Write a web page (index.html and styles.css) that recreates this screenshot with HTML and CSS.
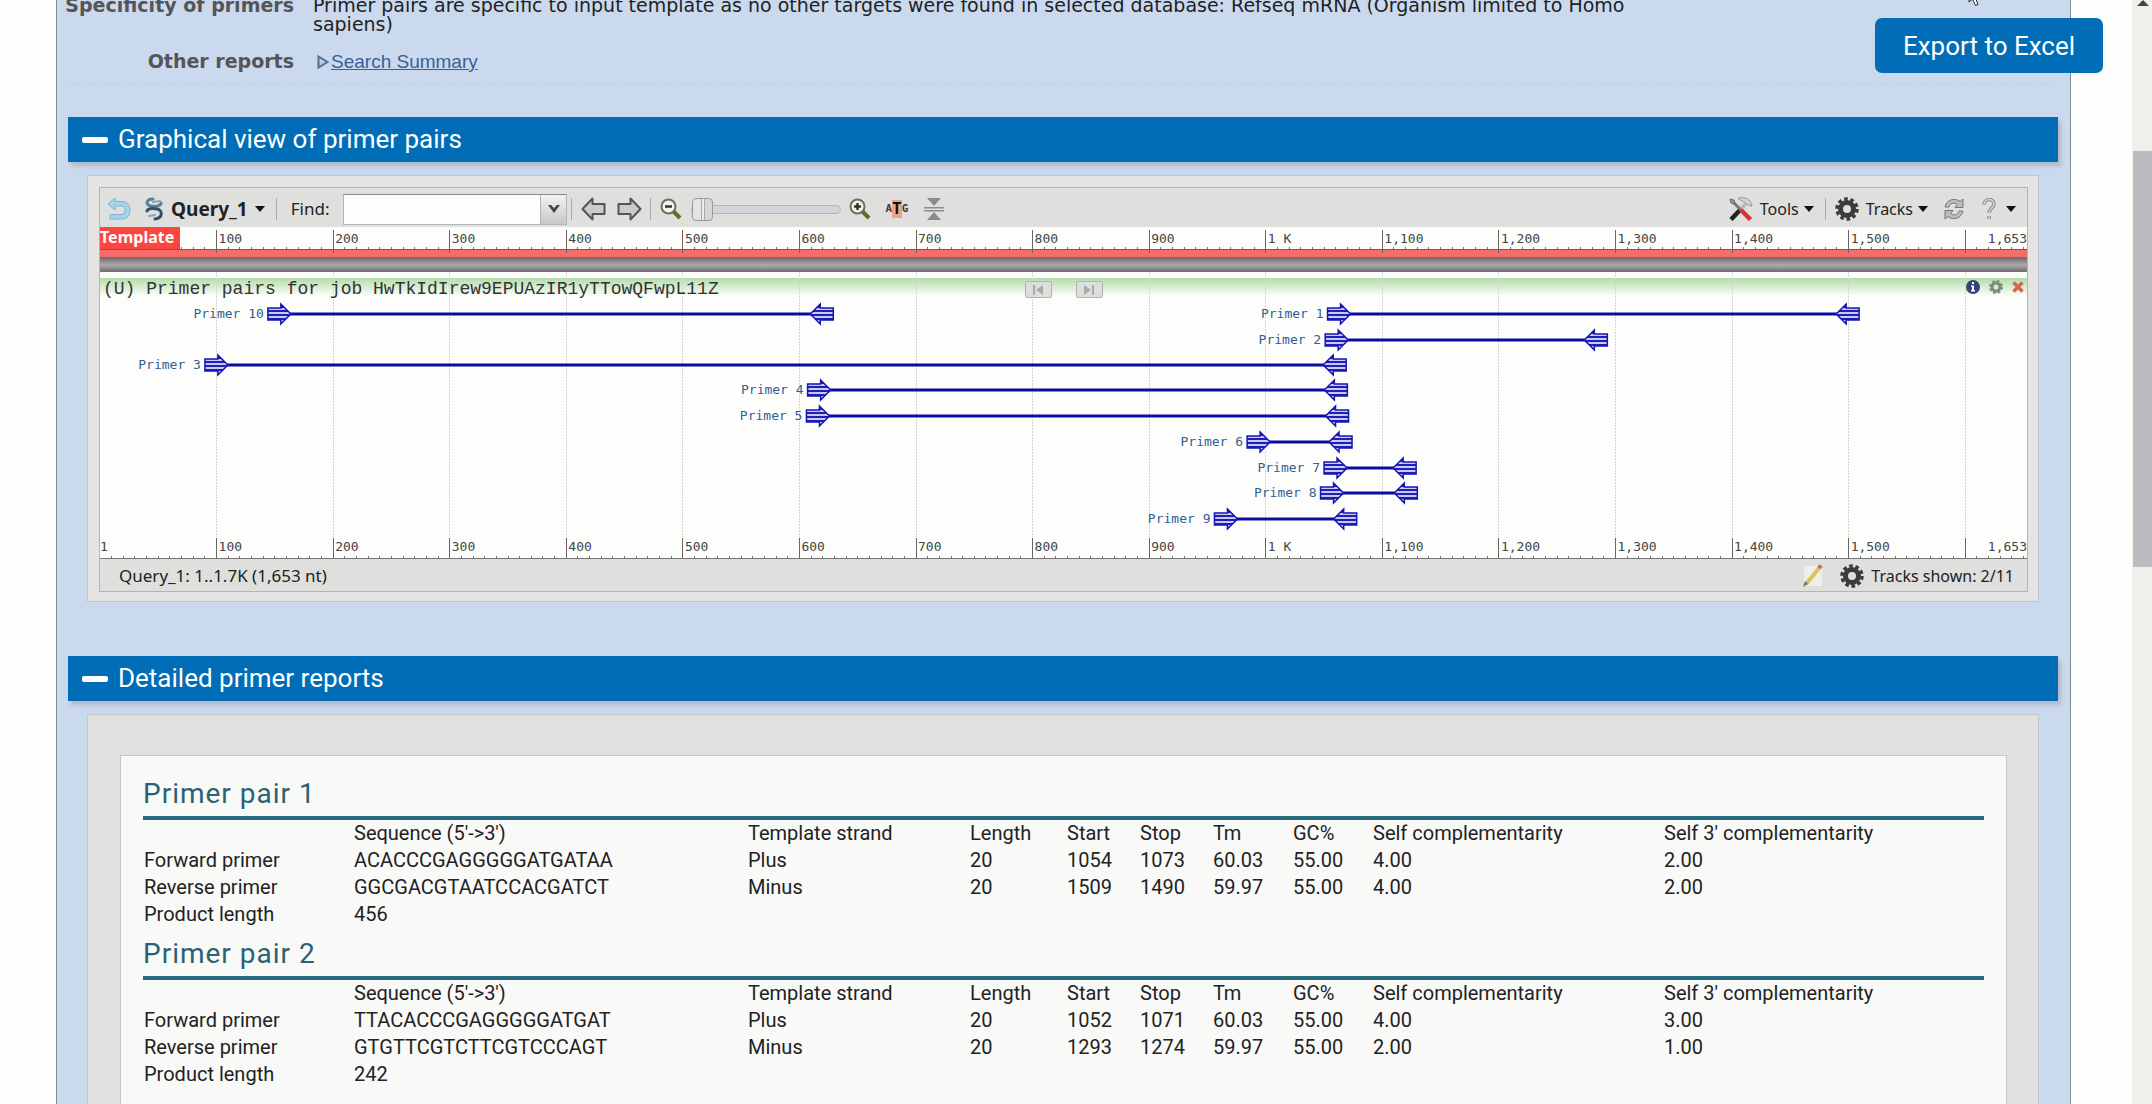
FILE: index.html
```html
<!DOCTYPE html>
<html lang="en">
<head>
<meta charset="utf-8">
<title>Primer-BLAST results</title>
<link rel="stylesheet" href="styles.css">
</head>
<body>
<main class="page">
  <section class="summary">
    <dl class="facts">
      <dt>Specificity of primers</dt>
      <dd>Primer pairs are specific to input template as no other targets were found in selected database: Refseq mRNA (Organism limited to Homo sapiens)</dd>
      <dt>Other reports</dt>
      <dd><svg class="disclosure" viewBox="0 0 12 14" aria-hidden="true"><path d="M1.5 1.5 L10.500 7 L1.500 12.500 Z"/></svg><a href="#search-summary">Search Summary</a></dd>
    </dl>
  </section>

  <h2 class="bar"><button type="button"><span class="minus"></span>Graphical view of primer pairs</button></h2>
  <section class="box graphic">
    <div class="viewer">
      <div class="toolbar">
        <button type="button" class="tool" aria-label="Undo"><svg width="24" height="24" viewBox="0 0 24 24"><path d="M1 7 L8 1 V4.500 H15 C21 4.500 23 9 23 13 C23 19 20 22 15 22 H3 V17.500 H14 C17 17.500 18 15.500 18 13 C18 10 17 9 14 9 H8 V13 Z" fill="#a5d3e8" stroke="#7fb4cf"/></svg></button>
        <button type="button" class="tool query"><svg width="20" height="24" viewBox="0 0 20 24" fill="none" stroke-linecap="round"><path d="M9 2 C2 2 1 8 7 9 C12 10 17 9 17 6" stroke="#5b7f95" stroke-width="3"/><path d="M3 14 C4 11 10 11 13 12 C19 13 19 21 11 22" stroke="#33506a" stroke-width="3"/><path d="M9 5 L16 4 M5 19 L11 18" stroke="#8ba6b6" stroke-width="2"/></svg><b>Query_1</b><i class="caret"></i></button>
        <span class="sep"></span>
        <label class="find" for="find">Find:</label>
        <div class="combo"><input id="find" type="text"><button type="button" aria-label="Show matches"><svg width="14" height="10" viewBox="0 0 14 10"><path d="M1 1 L7 9 L13 1 L10 1 L7 4 L4 1 Z" fill="#444"/></svg></button></div>
        <span class="sep tight"></span>
        <button type="button" class="tool pan" aria-label="Pan left"><svg width="25" height="24" viewBox="0 0 25 24"><path d="M1.500 12 L11.500 1.500 V7 H23.500 V17 H11.500 V22.500 Z" fill="#ccc" stroke="#555" stroke-width="2" stroke-linejoin="round"/></svg></button>
        <button type="button" class="tool pan" aria-label="Pan right"><svg width="25" height="24" viewBox="0 0 25 24"><path d="M23.500 12 L13.500 1.500 V7 H1.500 V17 H13.500 V22.500 Z" fill="#ccc" stroke="#555" stroke-width="2" stroke-linejoin="round"/></svg></button>
        <span class="sep tight"></span>
        <button type="button" class="tool zoom" aria-label="Zoom out"><svg width="22" height="22" viewBox="0 0 22 22"><path d="M13 13 L20 20" stroke="#6d6a20" stroke-width="4"/><circle cx="8.500" cy="8.500" r="7" fill="#f3f3ec" stroke="#6f6f55" stroke-width="2"/><path d="M5 8.500 H12" stroke="#333" stroke-width="2.500"/></svg></button>
        <input class="slider" type="range" min="0" max="100" value="0" aria-label="Zoom level">
        <button type="button" class="tool zoom" aria-label="Zoom in"><svg width="22" height="22" viewBox="0 0 22 22"><path d="M13 13 L20 20" stroke="#6d6a20" stroke-width="4"/><circle cx="8.500" cy="8.500" r="7" fill="#f3f3ec" stroke="#6f6f55" stroke-width="2"/><path d="M5 8.500 H12 M8.500 5 V12" stroke="#333" stroke-width="2.500"/></svg></button>
        <button type="button" class="tool atg" aria-label="Zoom to sequence"><span>A</span><b>T</b><span>G</span></button>
        <button type="button" class="tool" aria-label="Collapse tracks"><svg width="20" height="22" viewBox="0 0 20 22" fill="#8b8b8b"><path d="M3 0 H17 L10 8 Z M3 22 H17 L10 14 Z M0 9 H20 V10.500 H0 Z M0 12 H20 V13.500 H0 Z"/></svg></button>
        <div class="right">
          <button type="button" class="tool menu"><svg width="24" height="24" viewBox="0 0 24 24"><path d="M2 22.500 L11 13" stroke="#222" stroke-width="4.500"/><path d="M11 13 L19 4" stroke="#b9b9b9" stroke-width="3.500"/><path d="M9 1.500 C15 -1 22 2 23 9 L19 8 L15 5 Z" fill="#d4d4d4" stroke="#9a9a9a"/><path d="M3 4 L12 13" stroke="#777" stroke-width="3"/><path d="M1 2 L5 3 L6 7 L2 6 Z" fill="#999" stroke="#666"/><path d="M12 13 L21.500 22.500" stroke="#d5323a" stroke-width="4.500"/></svg>Tools<i class="caret"></i></button>
          <span class="sep"></span>
          <button type="button" class="tool menu"><svg width="24" height="24" viewBox="0 0 24 24" fill="none" stroke="#3c3c3c"><circle cx="12" cy="12" r="10" stroke-width="3.500" stroke-dasharray="3.600 2.683"/><circle cx="12" cy="12" r="6.500" stroke-width="5"/></svg>Tracks<i class="caret"></i></button>
          <button type="button" class="tool refresh" aria-label="Reload"><svg width="22" height="22" viewBox="0 0 22 22" fill="#bdbdbd" stroke="#777"><path d="M2 9 C3 2 12 -1 17 3.500 L20 1 V9.500 H12 L14.500 6.500 C11 4 7 5 6 9 Z"/><path d="M20 13 C19 20 10 23 5 18.500 L2 21 V12.500 H10 L7.500 15.500 C11 18 15 17 16 13 Z"/></svg></button>
          <button type="button" class="tool help" aria-label="Help"><svg width="14" height="22" viewBox="0 0 14 22" fill="none"><path d="M2 7 C2 0 12 0 12 6 C12 10 7 10 7 15 M7 18 V21" stroke="#8a8a8a" stroke-width="3.500"/><path d="M2 7 C2 0 12 0 12 6 C12 10 7 10 7 15 M7 18 V21" stroke="#d6d6d6" stroke-width="1.500"/></svg><i class="caret"></i></button>
        </div>
      </div>
      <div class="plot">
        <svg id="plot" class="canvas" role="img" aria-label="Primer pairs on the template"></svg>
        <div class="nav"><button type="button" aria-label="Previous feature"><svg width="12" height="10" viewBox="0 0 12 10"><path d="M1 0 H3 V10 H1 Z M11 0 V10 L4 5 Z" fill="#aaa"/></svg></button><button type="button" aria-label="Next feature"><svg width="12" height="10" viewBox="0 0 12 10"><path d="M9 0 H11 V10 H9 Z M1 0 V10 L8 5 Z" fill="#aaa"/></svg></button></div>
        <div class="track-tools">
          <button type="button" aria-label="Track information"><svg width="14" height="14" viewBox="0 0 14 14"><circle cx="7" cy="7" r="7" fill="#33447c"/><path d="M6 2 H8 V4 H6 Z M5 5.500 H8 V10 H9 V11.500 H5 V10 H6 V7 H5 Z" fill="#fff"/></svg></button>
          <button type="button" aria-label="Track settings"><svg width="14" height="14" viewBox="0 0 14 14" fill="none" stroke="#7c8c7c"><circle cx="7" cy="7" r="6" stroke-width="2" stroke-dasharray="2.700 2.010"/><circle cx="7" cy="7" r="4" stroke-width="3"/></svg></button>
          <button type="button" aria-label="Remove track"><svg width="12" height="12" viewBox="0 0 12 12"><path d="M1.500 1.500 L10.500 10.500 M10.500 1.500 L1.500 10.500" stroke="#d9634f" stroke-width="3.500"/></svg></button>
        </div>
      </div>
      <div class="status">
        <span>Query_1: 1..1.7K (1,653 nt)</span>
        <div class="right">
          <button type="button" class="tool pencil" aria-label="Edit"><svg width="23" height="24" viewBox="0 0 23 24"><path d="M2 2 H20 V22 H2 Z" fill="#eeeeea"/><path d="M4 20 L18 3" stroke="#d8c552" stroke-width="4"/><path d="M17 4 L19 1.500" stroke="#b56a6a" stroke-width="4"/><path d="M1 23 L3 17 L6 20 Z" fill="#777"/></svg></button>
          <button type="button" class="tool menu"><svg width="24" height="24" viewBox="0 0 24 24" fill="none" stroke="#3c3c3c"><circle cx="12" cy="12" r="10" stroke-width="3.500" stroke-dasharray="3.600 2.683"/><circle cx="12" cy="12" r="6.500" stroke-width="5"/></svg>Tracks shown: 2/11</button>
        </div>
      </div>
    </div>
  </section>

  <h2 class="bar"><button type="button"><span class="minus"></span>Detailed primer reports</button></h2>
  <section class="box reports">
    <div class="sheet">
      <article class="pair">
        <h3>Primer pair 1</h3>
        <table>
          <colgroup><col class="c-name"><col class="c-seq"><col class="c-strand"><col class="c-len"><col class="c-pos"><col class="c-pos"><col class="c-num"><col class="c-num"><col class="c-self"><col></colgroup>
          <tr><th></th><th>Sequence (5'-&gt;3')</th><th>Template strand</th><th>Length</th><th>Start</th><th>Stop</th><th>Tm</th><th>GC%</th><th>Self complementarity</th><th>Self 3' complementarity</th></tr>
          <tr><th>Forward primer</th><td>ACACCCGAGGGGGATGATAA</td><td>Plus</td><td>20</td><td>1054</td><td>1073</td><td>60.03</td><td>55.00</td><td>4.00</td><td>2.00</td></tr>
          <tr><th>Reverse primer</th><td>GGCGACGTAATCCACGATCT</td><td>Minus</td><td>20</td><td>1509</td><td>1490</td><td>59.97</td><td>55.00</td><td>4.00</td><td>2.00</td></tr>
          <tr><th>Product length</th><td colspan="9">456</td></tr>
        </table>
      </article>
      <article class="pair">
        <h3>Primer pair 2</h3>
        <table>
          <colgroup><col class="c-name"><col class="c-seq"><col class="c-strand"><col class="c-len"><col class="c-pos"><col class="c-pos"><col class="c-num"><col class="c-num"><col class="c-self"><col></colgroup>
          <tr><th></th><th>Sequence (5'-&gt;3')</th><th>Template strand</th><th>Length</th><th>Start</th><th>Stop</th><th>Tm</th><th>GC%</th><th>Self complementarity</th><th>Self 3' complementarity</th></tr>
          <tr><th>Forward primer</th><td>TTACACCCGAGGGGGATGAT</td><td>Plus</td><td>20</td><td>1052</td><td>1071</td><td>60.03</td><td>55.00</td><td>4.00</td><td>3.00</td></tr>
          <tr><th>Reverse primer</th><td>GTGTTCGTCTTCGTCCCAGT</td><td>Minus</td><td>20</td><td>1293</td><td>1274</td><td>59.97</td><td>55.00</td><td>2.00</td><td>1.00</td></tr>
          <tr><th>Product length</th><td colspan="9">242</td></tr>
        </table>
      </article>
    </div>
  </section>
</main>
<div class="scrollbar" aria-hidden="true"><span class="up"></span><span class="thumb"></span></div>
<button type="button" class="export">Export to Excel</button>
<svg class="pointer" width="14" height="20" viewBox="0 0 14 20" aria-hidden="true"><path d="M1 1 V15 L4.500 12 L7.500 18.500 L10 17.500 L7.500 11 H12 Z" fill="#fff" stroke="#222"/></svg>
<script src="plot.js"></script>
</body>
</html>
```
FILE: styles.css
```css
* { box-sizing: border-box; }

body {
  margin: 0;
  min-height: 100vh;
  display: flex;
  overflow: hidden;
  background: #fdfdfb;
  color: #222;
  font-family: Roboto, sans-serif;
  font-size: 20px;
}

button { font: inherit; color: inherit; border: 0; padding: 0; background: none; }
svg { display: block; flex: none; }

.page {
  flex: 1;
  min-width: 0;
  display: flex;
  flex-direction: column;
  margin: 0 61px 0 56px;
  padding: 0 12px 0 11px;
  background: #cbd9ee;
  border: solid #8089a0;
  border-width: 0 1px;
}

/* Summary rows */
.summary { height: 84px; border-bottom: 1px dashed #c4cddd; }
.facts {
  display: grid;
  grid-template-columns: 230px minmax(0, 1330px);
  column-gap: 19px;
  row-gap: 18px;
  margin: -4px 0 0 -4px;
  font: 19px/19px "DejaVu Sans", sans-serif;
}
.facts dt { text-align: right; font-weight: bold; color: #555; white-space: nowrap; }
.facts dd { display: flex; align-items: center; margin: 0; }
.facts a { color: #3a5f99; font-family: "Liberation Sans", sans-serif; }
.disclosure { width: 12px; height: 14px; margin: 0 2px 0 4px; fill: #b9cde6; stroke: #4f7196; stroke-width: 2; }

/* Section bars */
.bar {
  margin: 33px 0 0;
  height: 45px;
  background: #006db6;
  box-shadow: 3px 4px 4px #b4b9c4;
  color: #fff;
  font-size: 26px;
  font-weight: 400;
}
.bar button { display: flex; align-items: center; height: 43px; padding-left: 14px; }
.minus { width: 26px; height: 6px; margin: 3px 10px 0 0; border-radius: 2px; background: #fff; }

.box { margin: 13px 19px 0; border: 1px solid #c3c5c9; background: #e4e4e2; }
.graphic { padding: 11px 10px 9px 11px; margin-bottom: 21px; }

/* Sequence viewer */
.viewer { border: 1px solid #b3b3b8; background: #fdfdfb; font: 16px/20px "Noto Sans", sans-serif; }
.toolbar, .status { display: flex; align-items: center; background: #dfdfdd; color: #222; }
.toolbar { height: 39px; padding: 3px 11px 0 7px; }
.toolbar .sep { width: 1px; height: 22px; margin: 0 9px 0 11px; background: #aaa; }
.toolbar .sep.tight { margin: 0 9px 0 4px; }
.tool { display: flex; align-items: center; }
.right { display: flex; align-items: center; margin-left: auto; }
.query { margin-left: 13px; gap: 7px; }
.query b { font-size: 19px; }
.caret { border: 5px solid transparent; border-top: 6px solid #111; border-bottom: 0; }
.find { margin: 0 14px 0 5px; }
.find, .status span { font-size: 17px; }
.combo { display: flex; width: 224px; height: 31px; border: 1px solid #b5b5b5; border-top-color: #888; }
.combo input { flex: 1; min-width: 0; border: 0; padding: 0 4px; background: #fdfdfb; font: inherit; }
.combo button { display: grid; place-items: center; width: 26px; border-left: 1px solid #b5b5b5; background: linear-gradient(#f2f2f2, #c8c8c8); }
.pan + .pan { margin-left: 11px; }
.pan + .sep.tight { margin-left: 8px; }
.slider { appearance: none; width: 150px; height: 24px; margin: 0 8px 0 9px; background: none; }
.slider::-webkit-slider-runnable-track { height: 9px; border: 1px solid #b4b4bc; border-radius: 5px; background: #d3d3dc; }
.slider::-webkit-slider-thumb {
  appearance: none;
  width: 21px;
  height: 23px;
  margin-top: -8px;
  border: 1px solid #999;
  border-radius: 4px;
  background: linear-gradient(90deg, #e4e4e4 8px, #aaa 8px 9px, #eee 9px 11px, #aaa 11px 12px, #d6d6d6 12px);
}
.atg { margin: 0 16px 0 14px; font: bold 11px/18px "DejaVu Sans Mono", monospace; color: #4a3a33; }
.atg b { background: #e9a48c; color: #111; font-size: 16px; }
.menu { gap: 7px; }
.menu .caret { margin-left: -2px; }
.refresh { margin: 0 17px 0 15px; }
.help { gap: 10px; }
.status { height: 32px; padding: 2px 13px 0 19px; }
.pencil { margin-right: 15px; }

.plot { position: relative; }
.canvas { width: 100%; height: 332px; overflow: hidden; }
.canvas text { font: 13px "DejaVu Sans Mono", monospace; }
.canvas .tick-label { fill: #444; }
.canvas .primer-label { fill: #2f5f95; text-anchor: end; }
.canvas .track-title { font: 18px "Liberation Mono", monospace; fill: #333; }
.canvas .template { font: bold 16px "Noto Sans", sans-serif; fill: #fff; }
.nav { position: absolute; top: 54px; left: 48%; display: flex; gap: 24px; }
.nav button { display: grid; place-items: center; width: 27px; height: 17px; border: 1px solid #b0b5b0; border-radius: 2px; background: #dcdfdc; }
.track-tools { position: absolute; top: 53px; right: 3px; display: flex; align-items: center; gap: 9px; }

/* Reports */
.reports { flex: 1; display: flex; padding: 40px 31px 0 32px; border-bottom: 0; background: #e0e0de; }
.sheet { flex: 1; min-width: 0; padding: 22px 22px 0; background: #f9f9f7; border: 1px solid #c6c6ca; border-bottom: 0; }
.pair { height: 160px; }
.pair h3 {
  margin: 0;
  height: 42px;
  border-bottom: 4px solid #266b80;
  color: #2a6275;
  font-size: 28px;
  font-weight: 400;
  line-height: 32px;
  letter-spacing: 1px;
}
.pair table { width: 100%; table-layout: fixed; border-collapse: collapse; line-height: 27px; }
.pair th, .pair td { padding: 0 0 0 1px; text-align: left; font-weight: 400; white-space: nowrap; }
.c-name { width: 210px; }
.c-seq { width: 394px; }
.c-strand { width: 222px; }
.c-len { width: 97px; }
.c-pos { width: 73px; }
.c-num { width: 80px; }
.c-self { width: 291px; }

/* Floating controls and page scrollbar */
.export {
  position: fixed;
  top: 18px;
  right: 49px;
  width: 228px;
  height: 55px;
  border-radius: 7px;
  background: #006db6;
  color: #fff;
  font-size: 26px;
}
.pointer { position: fixed; top: -13px; right: 170px; }
.scrollbar { width: 20px; padding-left: 1px; background: #efefec; }
.up { display: block; width: 12px; height: 6px; margin: 0 0 0 4px; background: #444; clip-path: polygon(50% 0, 100% 100%, 0 100%); }
.thumb { display: block; height: 416px; margin-top: 145px; background: #bcbcc0; }
```
FILE: plot.js
```
// Draws the sequence ruler and the primer pairs; x values are percentages of the sequence length.
const LENGTH = 1653;
const plot = document.getElementById('plot');
const x = v => (v / LENGTH * 100) + '%';
const line = (v, y1, y2, colour, extra = '') =>
  `<line x1="${x(v)}" x2="${x(v)}" y1="${y1}" y2="${y2}" stroke="${colour}" shape-rendering="crispEdges" ${extra}/>`;
const label = v => v === 1000 ? '1 K' : v.toLocaleString('en-US');

let out = `<defs>
<linearGradient id="bar" x2="0" y2="1"><stop offset="0" stop-color="#6d6d72"/><stop offset=".5" stop-color="#ababab"/><stop offset="1" stop-color="#6d6d72"/></linearGradient>
<linearGradient id="head" x2="0" y2="1"><stop offset="0" stop-color="#b3dcaa"/><stop offset="1" stop-color="#fdfdfb"/></linearGradient>
<pattern id="stripe" width="4" height="4" patternUnits="userSpaceOnUse"><rect width="4" height="4" fill="#c9c9f4"/><rect width="4" height="2" fill="#2020b8"/></pattern>
</defs>
<rect y="51" width="100%" height="18" fill="url(#head)"/>`;
for (let v = 100; v < LENGTH; v += 100) out += line(v, 45, 310, '#d4d4d4', 'stroke-dasharray="2 1"');
out += `<rect y="23" width="100%" height="8" fill="#f76b68"/><rect y="22" width="100%" height="1" fill="#a44"/>
<rect y="30" width="100%" height="1" fill="#c44"/><rect y="31" width="100%" height="14" fill="url(#bar)"/>
<rect y="331" width="100%" height="1" fill="#777"/>`;
for (let v = 10; v < LENGTH; v += 10) out += line(v, 20, 22, '#777') + line(v, 329, 331, '#777');
for (let v = 100; v < LENGTH; v += 100) {
  out += line(v, 3, 26, '#666') + line(v, 311, 332, '#666');
  if (v < 1600) for (const y of [16, 324]) out += `<svg x="${x(v)}" overflow="visible"><text class="tick-label" x="2" y="${y}">${label(v)}</text></svg>`;
}
for (const y of [16, 324]) out += `<text class="tick-label" x="100%" y="${y}" text-anchor="end">1,653</text>`;
out += `<text class="tick-label" x="0" y="324">1</text>
<rect width="80" height="22" fill="#fb4541"/><text class="template" x="0" y="16">Template</text>
<text class="track-title" x="3" y="67">(U) Primer pairs for job HwTkIdIrew9EPUAzIR1yTTowQFwpL11Z</text>`;

// name, forward start, reverse start, row
const pairs = [
  [10, 144, 629, 0], [1, 1053, 1509, 0], [2, 1051, 1293, 1], [3, 90, 1069, 2], [4, 607, 1070, 3],
  [5, 606, 1071, 4], [6, 984, 1074, 5], [7, 1050, 1129, 6], [8, 1047, 1130, 7], [9, 956, 1078, 8]
];
const rows = [87, 113, 138, 163, 189, 215, 241, 266, 292];
const body = 'M0 -6 H13 V-10 L23 0 L13 10 V6 H0 Z';
for (const [name, from, to, row] of pairs) {
  const y = rows[row];
  out += `<line x1="${x(from + 19)}" x2="${x(to - 19)}" y1="${y}" y2="${y}" stroke="#0c0ca4" stroke-width="3"/>
<svg x="${x(from)}" y="${y}" overflow="visible"><path d="${body}" fill="url(#stripe)" stroke="#1414b4" stroke-width="1.500"/><text class="primer-label" x="-4" y="4">Primer ${name}</text></svg>
<svg x="${x(to)}" y="${y}" overflow="visible"><path d="${body}" transform="scale(-1 1)" fill="url(#stripe)" stroke="#1414b4" stroke-width="1.500"/></svg>`;
}
plot.innerHTML = out;
```
